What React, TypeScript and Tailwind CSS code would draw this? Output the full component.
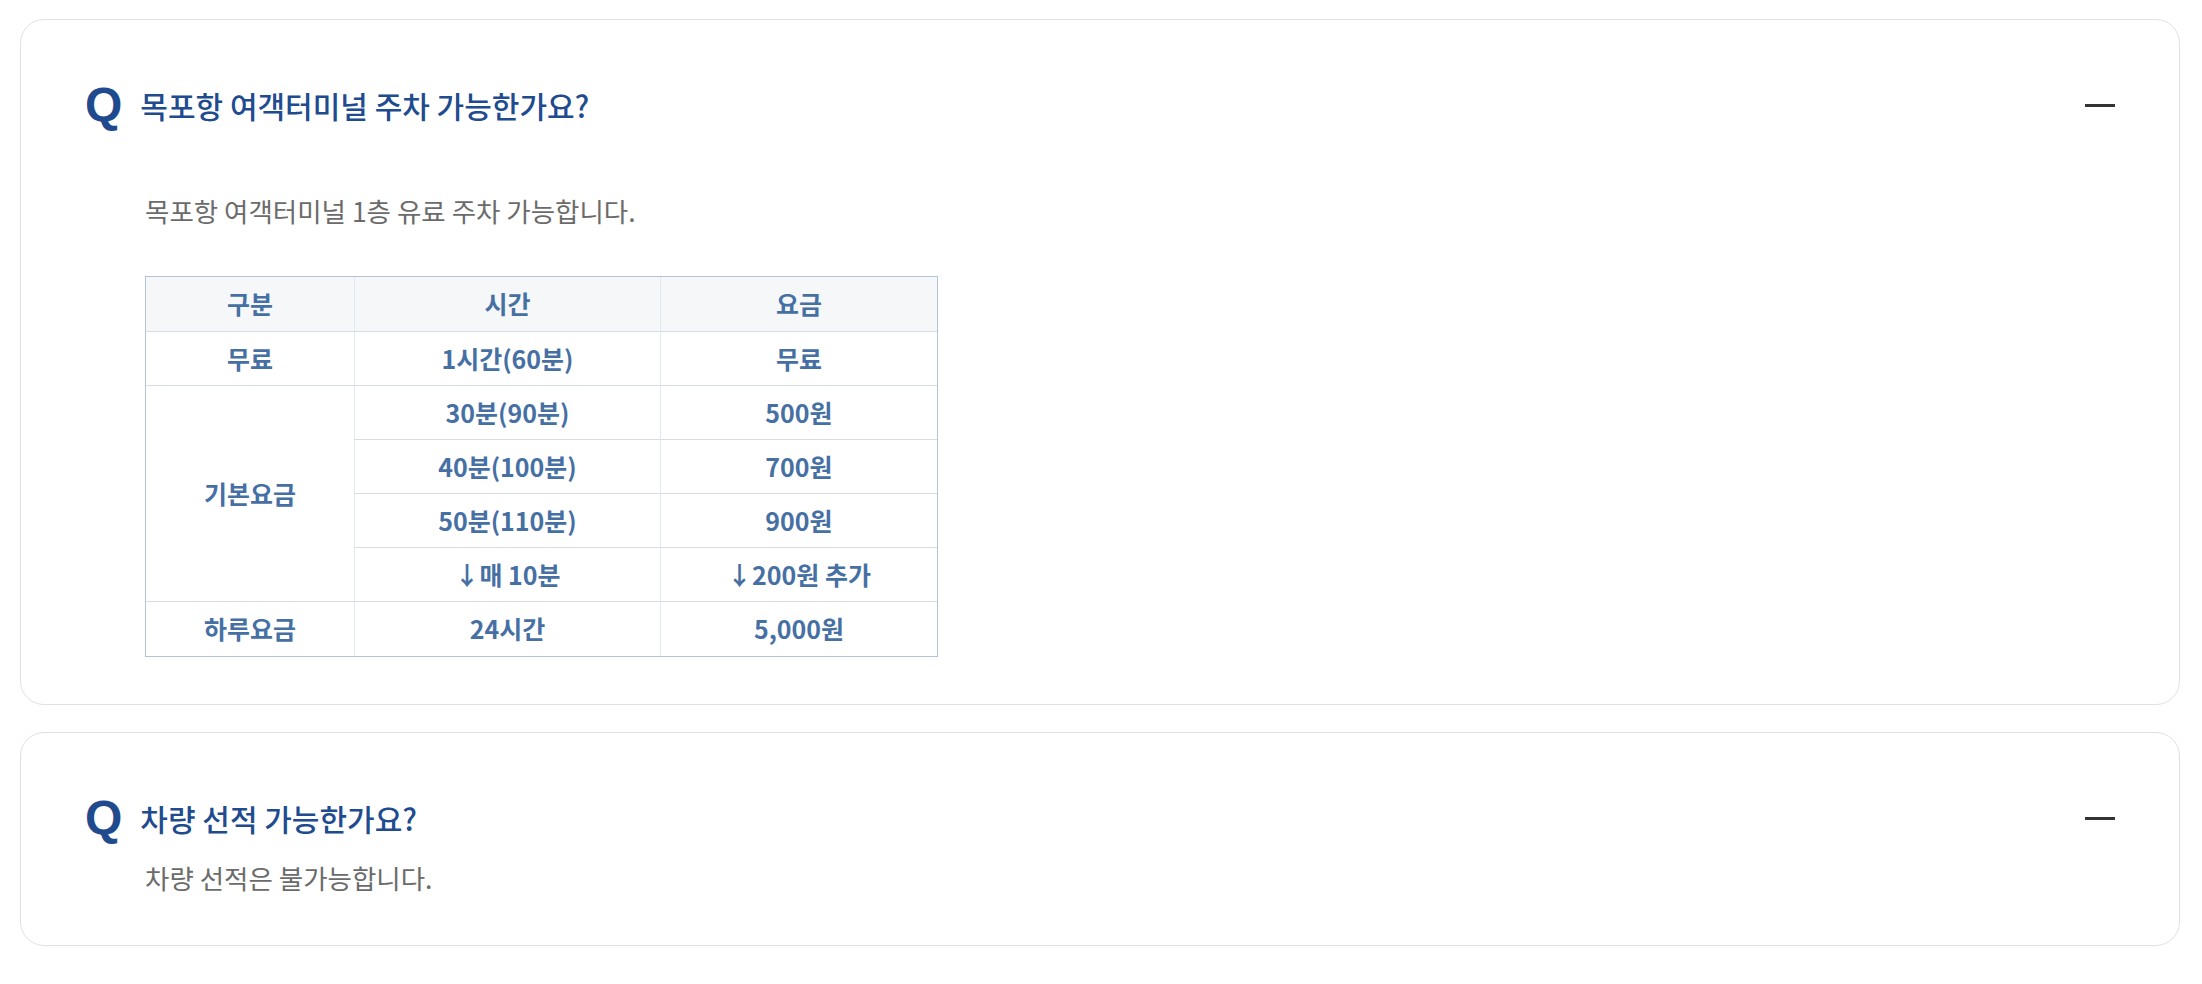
import type { ReactNode } from 'react'

const kr = "font-['Noto_Sans_CJK_KR','Noto_Sans',sans-serif]"

interface FaqProps {
  question: string
  children: ReactNode
  className?: string
}

function FaqItem({ question, children, className = '' }: FaqProps) {
  return (
    <div className={`w-full rounded-[24px] border border-[#e1e1e1] bg-white px-16 pt-[63px] ${className}`}>
      <div className="flex h-[44px] items-center">
        <span className="font-['Liberation_Sans',Arial,sans-serif] text-[48px] font-bold leading-none text-[#1f4a8e]">
          Q
        </span>
        <h3 className={`${kr} ml-[18px] text-[30px] font-medium leading-none text-[#214b8f]`}>
          {question}
        </h3>
        <div className="ml-auto h-[3px] w-[30px] bg-[#333333]" />
      </div>
      {children}
    </div>
  )
}

type Cell = { text: string; rowSpan?: number }

const rows: Cell[][] = [
  [{ text: '무료' }, { text: '1시간(60분)' }, { text: '무료' }],
  [{ text: '기본요금', rowSpan: 4 }, { text: '30분(90분)' }, { text: '500원' }],
  [{ text: '40분(100분)' }, { text: '700원' }],
  [{ text: '50분(110분)' }, { text: '900원' }],
  [{ text: '↓매 10분' }, { text: '↓200원 추가' }],
  [{ text: '하루요금' }, { text: '24시간' }, { text: '5,000원' }],
]

function FeeTable() {
  return (
    <div className="w-[793px] border border-[#b3c3d8]">
      <table className={`${kr} w-full table-fixed border-separate border-spacing-0 text-[25px] font-semibold text-[#4670a4]`}>
        <colgroup>
          <col className="w-[208px]" />
          <col className="w-[306px]" />
          <col />
        </colgroup>
        <thead>
          <tr className="h-[55px] bg-[#f5f7f9]">
            <th className="border-b border-[#d8dde3] font-semibold">구분</th>
            <th className="border-b border-l border-b-[#d8dde3] border-l-[#dfe9f4] font-semibold">시간</th>
            <th className="border-b border-l border-b-[#d8dde3] border-l-[#dfe9f4] font-semibold">요금</th>
          </tr>
        </thead>
        <tbody>
          {rows.map((row, i) => {
            const last = i === rows.length - 1
            const full = row.length === 3
            return (
              <tr key={i} className="h-[54px]">
                {row.map((c, j) => {
                  const first = full && j === 0
                  return (
                    <td
                      key={j}
                      rowSpan={c.rowSpan}
                      className={`text-center ${last ? '' : 'border-b border-b-[#d8dde3]'} ${
                        first ? '' : 'border-l border-l-[#dfe9f4]'
                      }`}
                    >
                      {c.text}
                    </td>
                  )
                })}
              </tr>
            )
          })}
        </tbody>
      </table>
    </div>
  )
}

export default function App() {
  return (
    <div className="min-h-screen bg-white pb-10 pl-[20px] pr-[22px] pt-[19px]">
      <FaqItem question="목포항 여객터미널 주차 가능한가요?" className="pb-[47px]">
        <div className="pl-[60px]">
          <p className={`${kr} mt-[66px] text-[26.5px] leading-[36px] text-[#6b6b6b]`}>
            목포항 여객터미널 1층 유료 주차 가능합니다.
          </p>
          <div className="mt-[47px]">
            <FeeTable />
          </div>
        </div>
      </FaqItem>
      <FaqItem question="차량 선적 가능한가요?" className="mt-[27px] pb-[49px]">
        <p className={`${kr} mt-[20px] pl-[60px] text-[26.5px] leading-[36px] text-[#6b6b6b]`}>
          차량 선적은 불가능합니다.
        </p>
      </FaqItem>
    </div>
  )
}
